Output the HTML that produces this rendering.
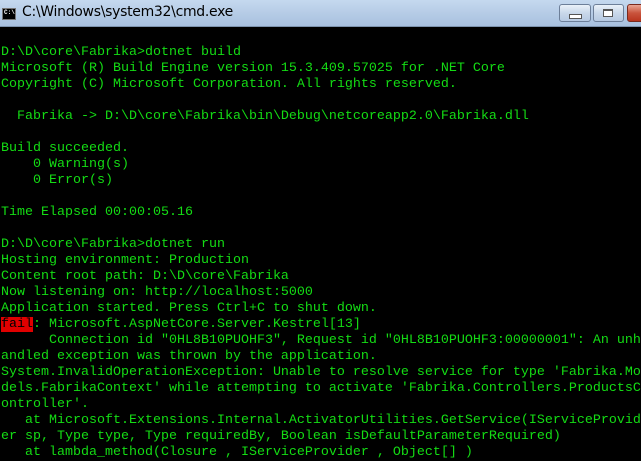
<!DOCTYPE html>
<html><head><meta charset="utf-8"><style>
html,body{margin:0;padding:0;width:641px;height:451px;overflow:hidden;background:#000}
.title{position:absolute;left:0;top:0;width:641px;height:26px;background:linear-gradient(#c5d9ef,#b6cce6 50%,#a9c1df);border-bottom:1px solid #7d93ad;}
.title .t{position:absolute;left:22px;top:4px;font:14px "DejaVu Sans","Liberation Sans",sans-serif;color:#000;letter-spacing:-0.3px}
.icon{position:absolute;left:2px;top:8px;width:12px;height:10px;background:#000;border:1px solid #777}
.icon:after{content:"C:\\";position:absolute;left:1px;top:0;font:bold 6px "Liberation Mono",monospace;color:#fff}
.btn{position:absolute;top:4px;height:16px;border:1px solid #6d7f99;border-radius:3px;background:linear-gradient(#eaf1f9,#c9d8ea 50%,#b6c9e2)}
.close{background:linear-gradient(#e9a594,#c9543d 50%,#b9351e);border-color:#7a2a1e}
pre{position:absolute;left:1px;top:29px;margin:0;font:13.33px/16px "Liberation Mono",monospace;color:#14dc14;white-space:pre}
.fail{background:#e00000;color:#000}
</style></head><body>
<div class="title"><div class="icon"></div><div class="t">C:\Windows\system32\cmd.exe</div>
<div class="btn" style="left:559px;width:30px"><div style="position:absolute;left:9px;top:9px;width:11px;height:3px;border:1px solid #555;background:#fff"></div></div>
<div class="btn" style="left:593px;width:29px"><div style="position:absolute;left:9px;top:4px;width:8px;height:5px;border:1px solid #555;border-top-width:2px;background:#fff"></div></div>
<div class="btn close" style="left:627px;width:30px"></div>
</div>
<pre>&#8203;
D:\D\core\Fabrika&gt;dotnet build
Microsoft (R) Build Engine version 15.3.409.57025 for .NET Core
Copyright (C) Microsoft Corporation. All rights reserved.

  Fabrika -&gt; D:\D\core\Fabrika\bin\Debug\netcoreapp2.0\Fabrika.dll

Build succeeded.
    0 Warning(s)
    0 Error(s)

Time Elapsed 00:00:05.16

D:\D\core\Fabrika&gt;dotnet run
Hosting environment: Production
Content root path: D:\D\core\Fabrika
Now listening on: http://localhost:5000
Application started. Press Ctrl+C to shut down.
<span class="fail">fail</span>: Microsoft.AspNetCore.Server.Kestrel[13]
      Connection id "0HL8B10PUOHF3", Request id "0HL8B10PUOHF3:00000001": An unh
andled exception was thrown by the application.
System.InvalidOperationException: Unable to resolve service for type 'Fabrika.Mo
dels.FabrikaContext' while attempting to activate 'Fabrika.Controllers.ProductsC
ontroller'.
   at Microsoft.Extensions.Internal.ActivatorUtilities.GetService(IServiceProvid
er sp, Type type, Type requiredBy, Boolean isDefaultParameterRequired)
   at lambda_method(Closure , IServiceProvider , Object[] )
</pre>
</body></html>
